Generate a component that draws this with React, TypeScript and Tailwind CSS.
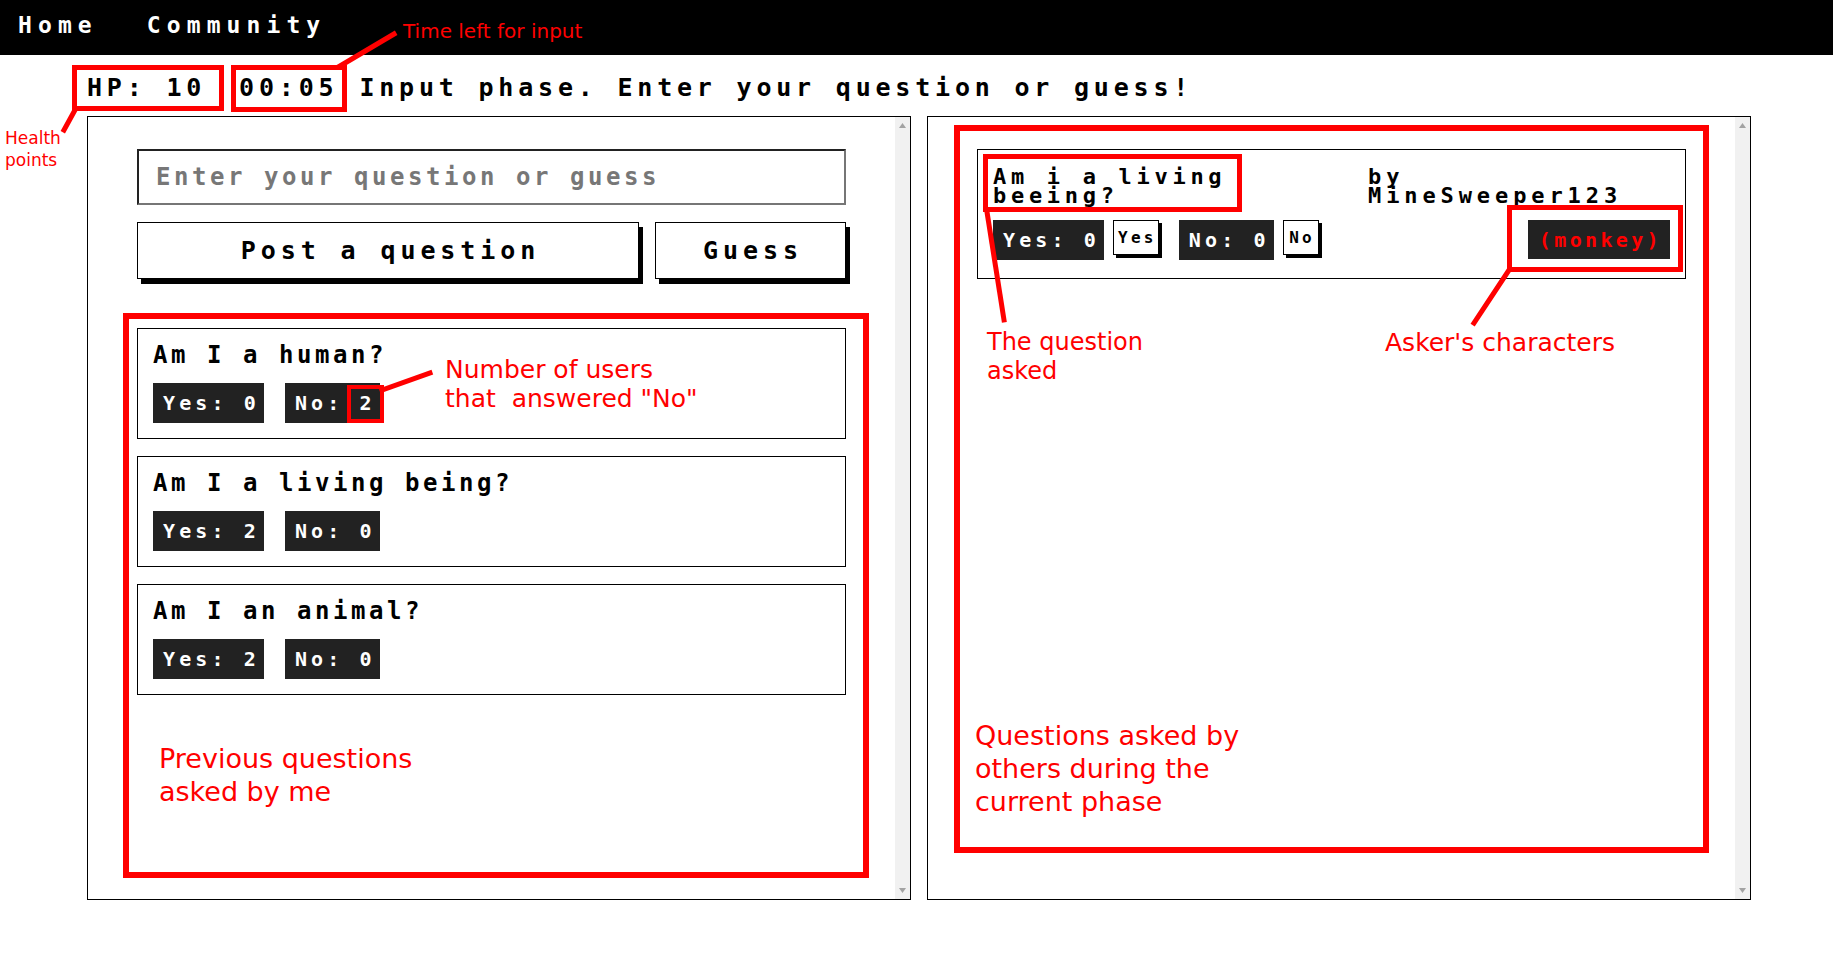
import React from 'react';

type Question = {
  text: string;
  yes: number;
  no: number;
};

const myQuestions: Question[] = [
  { text: 'Am I a human?', yes: 0, no: 2 },
  { text: 'Am I a living being?', yes: 2, no: 0 },
  { text: 'Am I an animal?', yes: 2, no: 0 },
];

const pixel = "font-['DejaVu_Sans_Mono',monospace] font-bold";
const note = "font-['DejaVu_Sans',sans-serif] text-[#ff0000]";

const Badge = ({ children, className = '' }: { children: React.ReactNode; className?: string }) => (
  <div className={`flex h-[40px] items-center whitespace-nowrap bg-[#222222] pl-[10px] pr-[4px] text-[20px] tracking-[4.1px] text-white ${className}`}>
    {children}
  </div>
);

const SmallButton = ({ label, width }: { label: string; width: string }) => (
  <button className={`flex h-[35px] ${width} items-center justify-center border border-black bg-white pl-[3px] text-[16px] tracking-[3.3px] text-black shadow-[3px_3px_0_#000]`}>
    {label}
  </button>
);

const Scrollbar = () => (
  <div className="flex w-[15px] flex-col items-center justify-between bg-[#f1f1f1] py-[6px]">
    <svg width="7" height="5" viewBox="0 0 7 5">
      <polygon points="3.5,0 7,5 0,5" fill="#a3a3a3" />
    </svg>
    <svg width="7" height="5" viewBox="0 0 7 5">
      <polygon points="0,0 7,0 3.5,5" fill="#a3a3a3" />
    </svg>
  </div>
);

const Box = ({ className }: { className: string }) => (
  <div className={`pointer-events-none absolute border-[#ff0000] ${className}`} />
);

export default function App() {
  return (
    <div className={`relative min-h-screen w-full bg-white text-black ${pixel}`}>
      {/* top nav */}
      <nav className="flex h-[55px] gap-[49px] bg-black pl-[18px] pt-[13px] text-[23px] leading-[25px] tracking-[6.1px] text-white">
        <span>Home</span>
        <span>Community</span>
      </nav>

      {/* status line */}
      <div className="flex pl-[87px] pt-[19px] pb-[14px] text-[25px] leading-[28px] tracking-[4.8px]">
        <span>HP: 10</span>
        <span className="ml-[33px]">00:05</span>
        <span className="ml-[21px]">Input phase. Enter your question or guess!</span>
      </div>

      <div className="flex gap-4 pl-[87px]">
        {/* my questions */}
        <div className="flex h-[784px] w-[824px] border border-black">
          <div className="flex flex-1 flex-col px-[49px] pt-[32px]">
            <input
              className="h-[56px] border-2 border-t-[#222222] border-l-[#222222] border-r-[#767676] border-b-[#767676] pl-[17px] text-[24px] tracking-[3.55px] outline-none placeholder:text-[#777777]"
              placeholder="Enter your question or guess"
            />
            <div className="mt-[17px] flex gap-4">
              <button className="h-[57px] flex-1 border border-black bg-white pl-[5px] text-[25px] tracking-[4.9px] shadow-[4px_5px_0_#000]">
                Post a question
              </button>
              <button className="h-[57px] w-[191px] border border-black bg-white pl-[5px] text-[25px] tracking-[4.9px] shadow-[4px_5px_0_#000]">
                Guess
              </button>
            </div>
            <div className="mt-[49px] flex flex-col gap-[17px]">
              {myQuestions.map((q) => (
                <div key={q.text} className="border border-black px-[15px] pt-[13px] pb-[15px]">
                  <div className="text-[24px] leading-[27px] tracking-[3.55px]">{q.text}</div>
                  <div className="mt-[14px] flex gap-[21px]">
                    <Badge>Yes: {q.yes}</Badge>
                    <Badge>No: {q.no}</Badge>
                  </div>
                </div>
              ))}
            </div>
          </div>
          <Scrollbar />
        </div>

        {/* questions from others */}
        <div className="flex h-[784px] w-[824px] border border-black">
          <div className="flex flex-1 flex-col px-[49px] pt-[32px]">
            <div className="border border-black px-[15px] pt-[17px] pb-[18px]">
              <div className="flex text-[22px] leading-[19px] tracking-[4.7px]">
                <div className="w-[360px]">Am i a living beeing?</div>
                <div className="ml-[15px] w-[290px] tracking-[4.9px]">by MineSweeper123</div>
              </div>
              <div className="mt-[15px] flex items-start">
                <Badge className="h-[39px]">Yes: 0</Badge>
                <div className="ml-[9px]">
                  <SmallButton label="Yes" width="w-[46px]" />
                </div>
                <Badge className="ml-[20px] h-[39px]">No: 0</Badge>
                <div className="ml-[9px]">
                  <SmallButton label="No" width="w-[36px]" />
                </div>
                <div className="ml-auto flex h-[39px] items-center whitespace-nowrap bg-[#222222] pl-[11px] pr-[8px] text-[20px] tracking-[3.35px] text-[#ff0000]">
                  (monkey)
                </div>
              </div>
            </div>
          </div>
          <Scrollbar />
        </div>
      </div>

      {/* annotations */}
      <svg className="pointer-events-none absolute left-0 top-0 h-[968px] w-[1833px]">
        <g stroke="#ff0000" strokeWidth="5" strokeLinecap="square">
          <line x1="340" y1="66" x2="394" y2="34" />
          <line x1="75" y1="110" x2="64" y2="130" />
          <line x1="382" y1="390" x2="430" y2="373" />
          <line x1="987" y1="212" x2="1004" y2="320" />
          <line x1="1509" y1="270" x2="1474" y2="323" />
        </g>
      </svg>

      <Box className="left-[72px] top-[65px] h-[46px] w-[152px] border-[5px]" />
      <Box className="left-[231px] top-[65px] h-[47px] w-[116px] border-[5px]" />
      <Box className="left-[347px] top-[385px] h-[38px] w-[37px] border-[4px]" />
      <Box className="left-[123px] top-[313px] h-[565px] w-[746px] border-[6px]" />
      <Box className="left-[954px] top-[125px] h-[728px] w-[755px] border-[6px]" />
      <Box className="left-[983px] top-[154px] h-[58px] w-[259px] border-[5px]" />
      <Box className="left-[1507px] top-[205px] h-[67px] w-[176px] border-[5px]" />

      <div className={`absolute left-[403px] top-[19px] text-[20px] leading-[24px] font-normal tracking-normal ${note}`}>
        Time left for input
      </div>
      <div className={`absolute left-[5px] top-[127px] text-[17px] leading-[22px] font-normal tracking-normal ${note}`}>
        Health
        <br />
        points
      </div>
      <div className={`absolute left-[445px] top-[355px] whitespace-pre text-[25px] leading-[29px] font-normal tracking-normal ${note}`}>
        {'Number of users\nthat  answered "No"'}
      </div>
      <div className={`absolute left-[159px] top-[742px] text-[27px] leading-[33px] font-normal tracking-normal ${note}`}>
        Previous questions
        <br />
        asked by me
      </div>
      <div className={`absolute left-[987px] top-[328px] text-[24px] leading-[29px] font-normal tracking-normal ${note}`}>
        The question
        <br />
        asked
      </div>
      <div className={`absolute left-[1385px] top-[328px] text-[25px] leading-[29px] font-normal tracking-normal ${note}`}>
        Asker's characters
      </div>
      <div className={`absolute left-[975px] top-[719px] text-[27px] leading-[33px] font-normal tracking-normal ${note}`}>
        Questions asked by
        <br />
        others during the
        <br />
        current phase
      </div>
    </div>
  );
}
